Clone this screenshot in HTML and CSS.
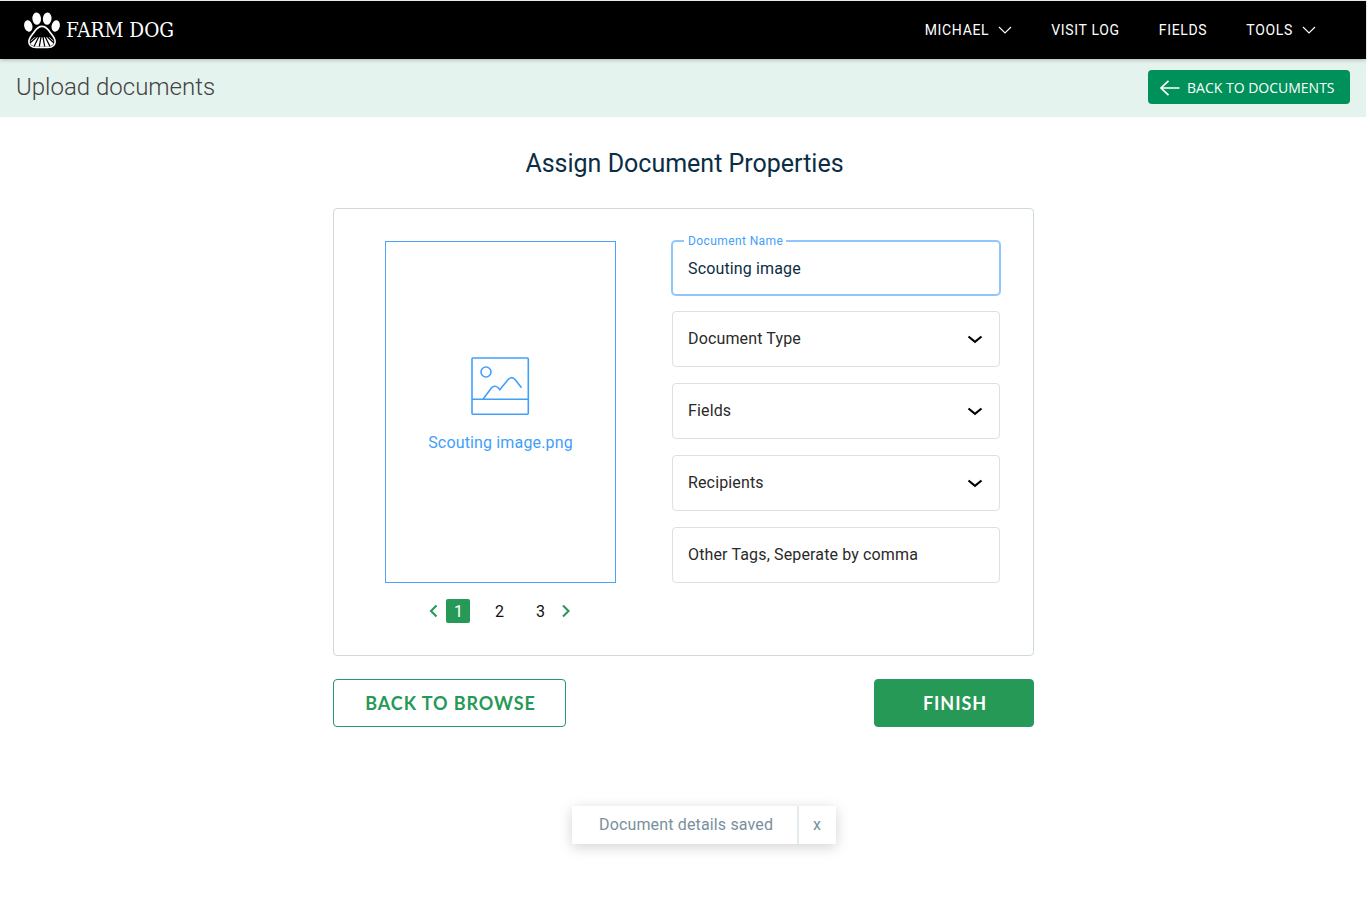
FILE: index.html
```html
<!DOCTYPE html>
<html lang="en">
<head>
<meta charset="utf-8">
<title>Farm Dog - Upload documents</title>
<link rel="stylesheet" href="styles.css">
</head>
<body>
<header class="topbar">
  <a class="brand">
    <svg class="paw" width="36" height="37" viewBox="0 0 36 37">
      <g fill="#fff">
        <ellipse cx="4.3" cy="14" rx="4.1" ry="5.8" transform="rotate(-12 4.3 14)"/>
        <ellipse cx="12.7" cy="6.6" rx="4.3" ry="6.2" transform="rotate(-4 12.7 6.6)"/>
        <ellipse cx="23.2" cy="6.6" rx="4.3" ry="6.2" transform="rotate(4 23.2 6.6)"/>
        <ellipse cx="31.7" cy="14" rx="4.1" ry="5.8" transform="rotate(12 31.7 14)"/>
      </g>
      <path d="M18 14.4C13.8 14.4 12.2 17.2 10.2 20C7.800 23.300 4.900 25.500 4.900 29.600C4.900 33.900 8 35.400 12 35.400H24C28 35.400 31.100 33.900 31.100 29.600C31.100 25.500 28.200 23.300 25.800 20C23.800 17.200 22.200 14.400 18 14.400Z" fill="none" stroke="#fff" stroke-width="1.7"/>
      <path d="M10.500 25.300L25.500 25.300L29.200 28.500L29.600 32L26 34.600H10L6.400 32L6.800 28.500Z" fill="#fff"/>
      <path d="M12.500 25L6 31M14.700 25L10 34.500M17 25L15.300 34.500M19 25L20.700 34.500M21.300 25L26 34.500M23.500 25L30 31" stroke="#000" stroke-width="1.300"/>
    </svg>
    <span class="brand-name">FARM DOG</span>
  </a>
  <nav class="nav">
    <a>MICHAEL<svg width="14" height="8" viewBox="0 0 14 8"><path d="M1 1L7 7L13 1"/></svg></a>
    <a>VISIT LOG</a>
    <a>FIELDS</a>
    <a>TOOLS<svg width="14" height="8" viewBox="0 0 14 8"><path d="M1 1L7 7L13 1"/></svg></a>
  </nav>
</header>
<section class="subbar">
  <h1>Upload documents</h1>
  <button class="back-docs">
    <svg width="20" height="16" viewBox="0 0 20 16"><path d="M19.500 8H1M8.500 .8L1 8L8.500 15.200"/></svg>
    <span>BACK TO DOCUMENTS</span>
  </button>
</section>
<main class="content">
  <h2>Assign Document Properties</h2>
  <div class="card">
    <div class="preview-col">
      <div class="preview">
        <svg width="60" height="60" viewBox="0 0 60 60"><rect x="2" y="2" width="56.300" height="56.300" rx="1"/><path d="M2 43.200H58M13 43.200L21.200 32.300Q24.500 28.500 28.500 32L29.800 33.800L37.500 24.300Q41.500 19.200 45.500 24L51.500 31.800"/><circle cx="16" cy="16" r="5"/></svg>
        <span>Scouting image.png</span>
      </div>
      <div class="pager">
        <svg width="10" height="14" viewBox="0 0 10 14"><path d="M8.500 1.500L3 7L8.500 12.500"/></svg>
        <span class="page active">1</span><span class="page">2</span><span class="page">3</span>
        <svg width="10" height="14" viewBox="0 0 10 14"><path d="M2 1.500L7.500 7L2 12.500"/></svg>
      </div>
    </div>
    <div class="fields">
      <div class="field focused"><span class="label">Document Name</span><span>Scouting image</span></div>
      <div class="field"><span>Document Type</span><svg width="16" height="9" viewBox="0 0 16 9"><path d="M1.500 1.500L8 6.800L14.500 1.500"/></svg></div>
      <div class="field"><span>Fields</span><svg width="16" height="9" viewBox="0 0 16 9"><path d="M1.500 1.500L8 6.800L14.500 1.500"/></svg></div>
      <div class="field"><span>Recipients</span><svg width="16" height="9" viewBox="0 0 16 9"><path d="M1.500 1.500L8 6.800L14.500 1.500"/></svg></div>
      <div class="field"><span>Other Tags, Seperate by comma</span></div>
    </div>
  </div>
  <div class="actions">
    <button class="btn outline">BACK TO BROWSE</button>
    <button class="btn solid">FINISH</button>
  </div>
</main>
<div class="toast"><span class="toast-text">Document details saved</span><span class="toast-close">x</span></div>
</body>
</html>
```
FILE: styles.css
```css
* { box-sizing: border-box; }
body { margin: 0; height: 900px; overflow: hidden; background: #fff; font-family: Roboto, "Liberation Sans", sans-serif; color: #2a2a2a; }
svg { flex: none; display: block; }
button { font: inherit; margin: 0; }
h1, h2 { margin: 0; white-space: nowrap; }
.topbar { position: relative; width: 1366px; height: 59px; border-top: 1px solid #e4ebe8; background: #000; display: flex; justify-content: space-between; align-items: center; padding: 0 50px 0 24px; box-shadow: 0 1px 4px rgba(0,0,0,.25); }
.brand { display: flex; align-items: center; gap: 6px; }
.brand-name { color: #fff; font: 20px/30px "DejaVu Serif", serif; white-space: nowrap; width: 108px; transform: scaleX(.925); transform-origin: left; }
.nav { display: flex; gap: 39px; color: #fff; font-size: 14px; letter-spacing: .67px; line-height: 20px; white-space: nowrap; }
.nav a { display: flex; align-items: center; }
.nav svg { margin-left: 9px; fill: none; stroke: #fff; stroke-width: 1.1; }
.subbar { width: 1366px; height: 58px; background: #e5f3ee; display: flex; justify-content: space-between; align-items: center; padding: 0 16px; }
.subbar h1 { font-size: 24px; font-weight: 300; line-height: 32px; color: #424242; letter-spacing: 0; padding-bottom: 3px; }
.back-docs { width: 202px; height: 34px; margin-bottom: 2px; border: 0; border-radius: 4px; background: #00915a; color: #fff; display: flex; align-items: center; gap: 7px; padding: 1px 0 0 12px; font: 14px/20px "Open Sans", "Noto Sans", sans-serif; white-space: nowrap; }
.back-docs svg { fill: none; stroke: #fff; stroke-width: 1.6; }
.content { width: 701px; margin: 0 0 0 333px; padding-top: 31px; }
.content h2 { height: 32px; font-size: 25px; line-height: 32px; font-weight: 400; color: #0b2d45; text-align: center; letter-spacing: 0; padding-left: 2px; }
.card { margin-top: 28px; height: 448px; border: 1px solid #cfd8dc; border-radius: 4px; display: flex; justify-content: space-between; padding: 31px 33px 0 51px; }
.preview-col { width: 231px; padding-top: 1px; }
.preview { height: 342px; border: 1px solid #4da3fb; display: flex; flex-direction: column; align-items: center; padding-top: 114px; color: #42a0fa; font-size: 16px; line-height: 20px; letter-spacing: .15px; gap: 17px; }
.preview svg { fill: none; stroke: #42a0fa; stroke-width: 1.6; margin-right: 2px; }
.pager { display: flex; align-items: center; height: 24px; margin-top: 16px; padding-left: 43px; }
.pager svg { fill: none; stroke: #279957; stroke-width: 2.1; }
.page { width: 24px; height: 24px; margin-right: 17px; padding-left: 1px; line-height: 25px; text-align: center; font-size: 16px; border-radius: 2px; color: #111; }
.page.active { margin-left: 8px; background: #279957; color: #fff; }
.page + svg { margin-left: -8px; }
.fields { width: 328px; display: flex; flex-direction: column; gap: 16px; }
.field { position: relative; height: 56px; border: 1px solid #e0e0e0; border-radius: 4px; display: flex; justify-content: space-between; align-items: center; padding: 0 16px 1px 15px; font-size: 16px; line-height: 20px; letter-spacing: .14px; }
.field svg { fill: none; stroke: #000; stroke-width: 2.1; margin-top: 2px; }
.field.focused { height: 56px; margin: 0 -1px -1px; padding: 2px 16px 0 15px; border: 2px solid #90c6fc; border-radius: 5px; color: #0b2d45; }
.label { position: absolute; left: 11px; top: -9px; padding: 0 3px 0 4px; background: #fff; color: #42a0fa; font-size: 12px; line-height: 16px; letter-spacing: .4px; }
.actions { margin-top: 23px; display: flex; justify-content: space-between; }
.btn { height: 48px; border-radius: 4px; border: 1px solid #279967; font: bold 18px/24px Lato, sans-serif; letter-spacing: .93px; padding: 0 0 0 2px; white-space: nowrap; }
.outline { width: 233px; color: #279957; background: #fff; }
.solid { width: 160px; color: #fff; background: #279957; }
.toast { width: 264px; height: 38px; margin: 79px 0 0 572px; display: flex; background: #fff; box-shadow: 0 3px 14px rgba(0,0,0,.18); color: #78909c; font-size: 16px; line-height: 37px; }
.toast-text { width: 227px; padding-left: 27px; border-right: 2px solid #e3eaed; letter-spacing: .15px; white-space: nowrap; }
.toast-close { flex: 1; padding-right: 1px; text-align: center; }
```
